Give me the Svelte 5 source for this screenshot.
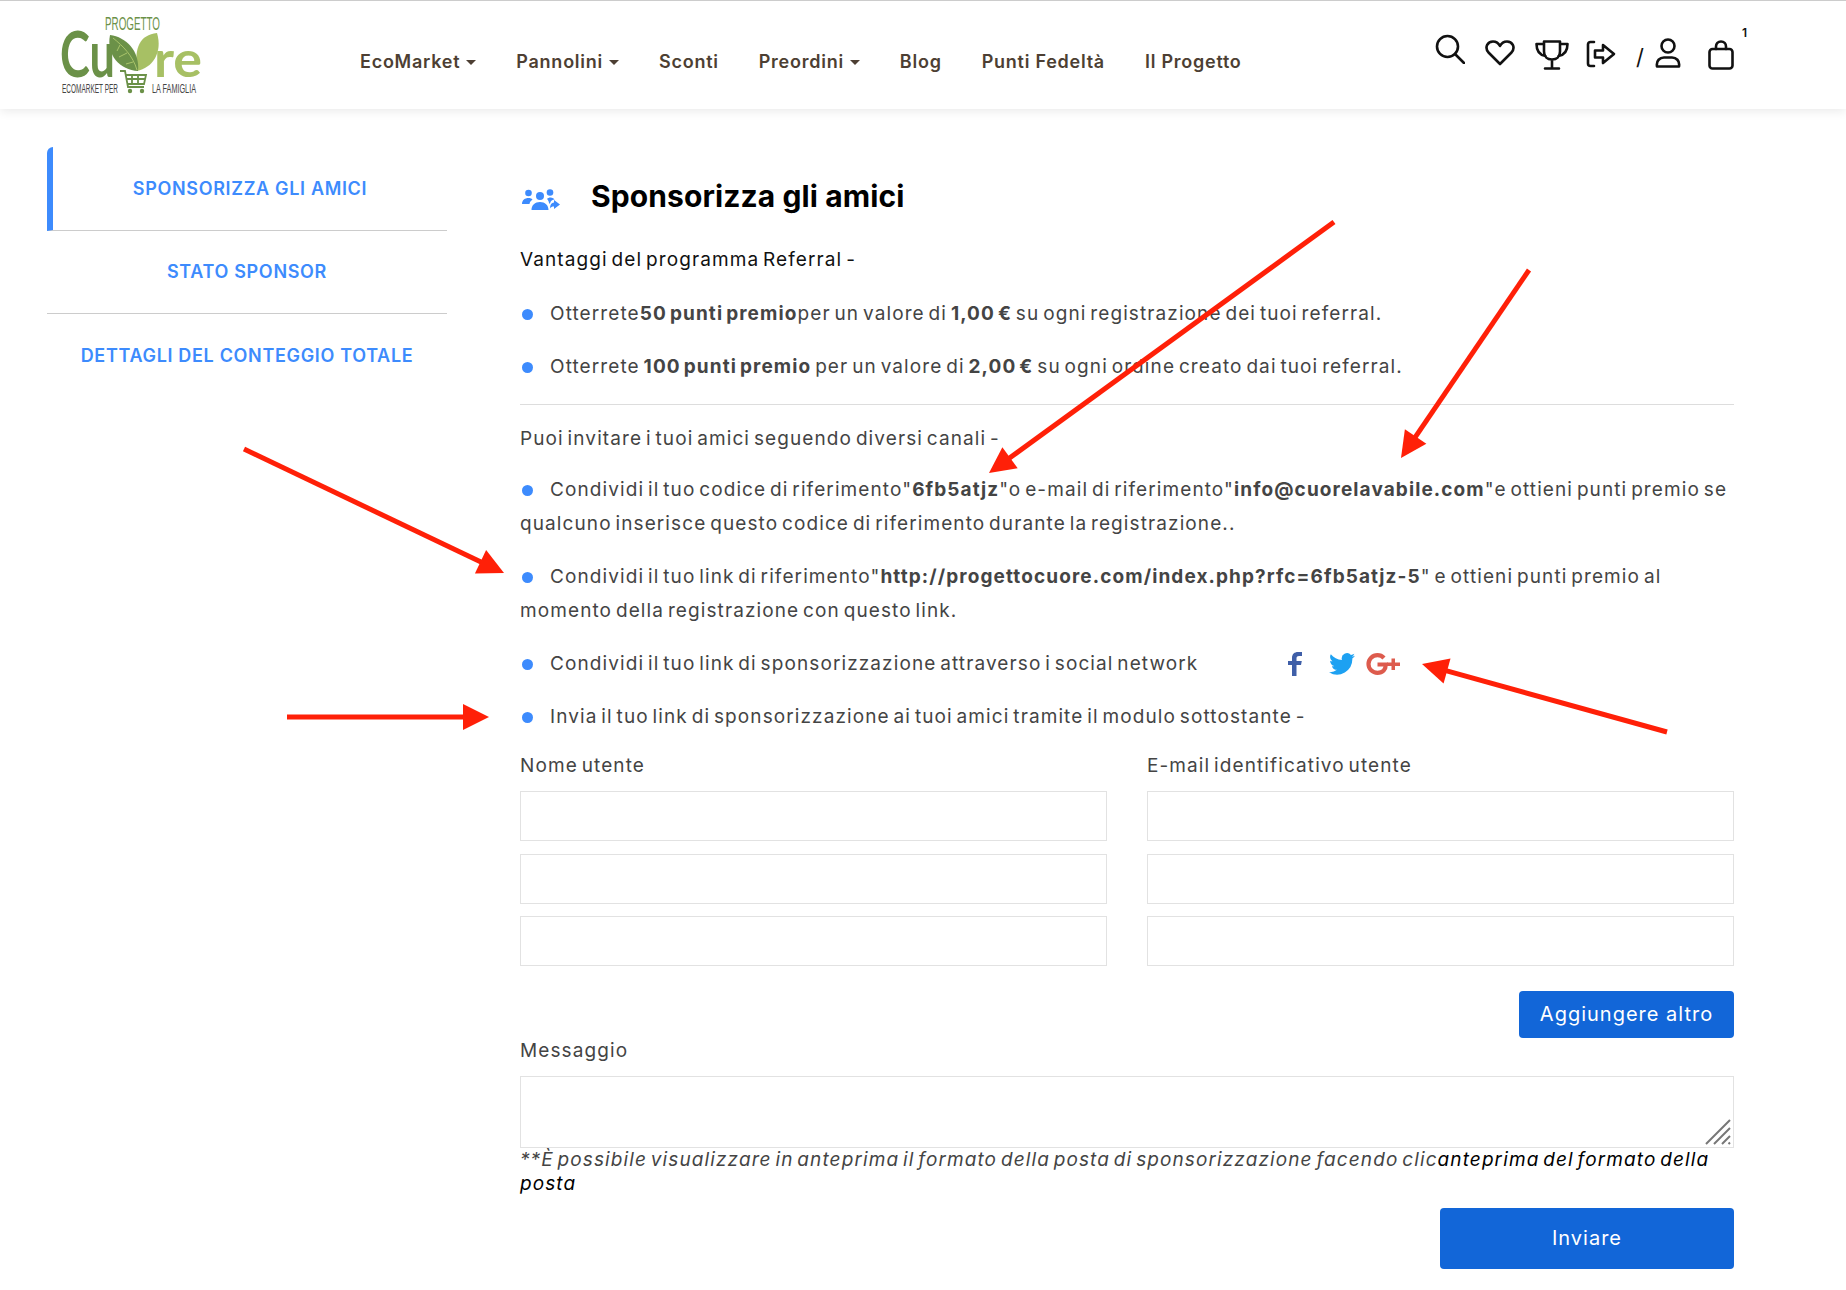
<script>
const nav = [
  { label: 'EcoMarket', caret: true },
  { label: 'Pannolini', caret: true },
  { label: 'Sconti' },
  { label: 'Preordini', caret: true },
  { label: 'Blog' },
  { label: 'Punti Fedeltà' },
  { label: 'Il Progetto' }
]
const tabs = ['SPONSORIZZA GLI AMICI', 'STATO SPONSOR', 'DETTAGLI DEL CONTEGGIO TOTALE']

// annotation arrows drawn on the screenshot: tail x,y then tip x,y
const arrows = [
  [1334, 222, 989, 473],
  [1529, 270, 1401, 458],
  [244, 449, 504, 573],
  [287, 717, 489, 717],
  [1667, 732, 1422, 664]
]
function head(a) {
  const ang = Math.atan2(a[3] - a[1], a[2] - a[0])
  const len = 26, w = 13
  const bx = a[2] - Math.cos(ang) * len, by = a[3] - Math.sin(ang) * len
  const nx = -Math.sin(ang) * w, ny = Math.cos(ang) * w
  return `${a[2]},${a[3]} ${bx + nx},${by + ny} ${bx - nx},${by - ny}`
}
function neck(a) {
  const ang = Math.atan2(a[3] - a[1], a[2] - a[0])
  return { x: a[2] - Math.cos(ang) * 22, y: a[3] - Math.sin(ang) * 22 }
}
</script>

<div class="page">
  <header>
    <a class="logo" href="#top">
      <svg width="190" height="84" viewBox="0 0 190 84">
        <text x="45" y="17" class="l-prog" textLength="55" lengthAdjust="spacingAndGlyphs">PROGETTO</text>
        <text x="0" y="64" class="l-cu" textLength="55" lengthAdjust="spacingAndGlyphs">Cu</text>
        <path d="M97 20C80 22 74 34 77 58 92 55 103 40 97 20z" fill="#a7c064"/>
        <path d="M50 22C66 24 80 38 78 58 60 57 46 42 50 22z" fill="#6b9148"/>
        <path d="M53 25c10 8 20 18 24 32M60 32l-3 6M67 40l-8 4M73 49l-7 2" stroke="#a9c46a" stroke-width="1" fill="none"/>
        <text x="94" y="64" class="l-re" textLength="48" lengthAdjust="spacingAndGlyphs">re</text>
        <text x="2" y="80" class="l-sub" textLength="56" lengthAdjust="spacingAndGlyphs">ECOMARKET PER</text>
        <text x="92" y="80" class="l-sub" textLength="44" lengthAdjust="spacingAndGlyphs">LA FAMIGLIA</text>
        <path d="M60 58h5l3 16h16M66 62h20l-2 9H68M72 62v9M78 62v9M67 66h18" stroke="#6b9148" stroke-width="1.800" fill="none"/>
        <circle cx="70" cy="78" r="2.200" fill="#6b9148"/><circle cx="82" cy="78" r="2.200" fill="#6b9148"/>
      </svg>
    </a>
    <nav>
      {#each nav as item}
        <span class="nav-item">{item.label}{#if item.caret}<i class="caret"></i>{/if}</span>
      {/each}
    </nav>
    <div class="tools">
      <svg class="t-search" width="30" height="30" viewBox="0 0 30 30"><circle cx="12.500" cy="12.500" r="10.500"/><path d="M20 20l9 9"/></svg>
      <svg class="t-heart" width="30" height="26" viewBox="0 0 30 26"><path d="M15 24L3.500 12.500C-1 7 3 1.500 8 1.500c3 0 5.500 1.500 7 4.500 1.500-3 4-4.500 7-4.500 5 0 9 5.500 4.500 11z"/></svg>
      <svg class="t-trophy" width="34" height="30" viewBox="0 0 34 30"><path d="M9 1.500h16v10c0 5-3 8-8 8s-8-3-8-8zM9 4H1.500c0 7 3 11 9 12M25 4h7.500c0 7-3 11-9 12M17 19.500V28M10 28.500h14"/></svg>
      <svg class="t-login" width="30" height="28" viewBox="0 0 30 28"><path d="M8 2H4.500C3 2 2 3 2 4.500v19C2 25 3 26 4.500 26H8M9 10.500h8V5l11 9-11 9v-5.500H9z"/></svg>
      <span class="slash">/</span>
      <svg class="t-user" width="26" height="30" viewBox="0 0 26 30"><circle cx="13" cy="8" r="6.500"/><path d="M2 28.500c-1-6 3-9 7-9h8c4 0 8 3 7 9z"/></svg>
      <span class="bag">
        <svg width="26" height="30" viewBox="0 0 26 30"><rect x="1.500" y="9" width="23" height="19.500" rx="3"/><path d="M8 9V6.500c0-3 2-5 5-5s5 2 5 5V9"/></svg>
        <b>1</b>
      </span>
    </div>
  </header>

  <div class="body">
    <aside>
      {#each tabs as tab, i}
        <a href="#top" class="tab" class:active={i === 0} class:last={i === 2}>{tab}</a>
      {/each}
    </aside>

    <main>
      <div class="title">
        <svg width="38" height="24" viewBox="0 0 38 24" fill="#3d8bfd">
          <circle cx="6.500" cy="5" r="3.300"/><circle cx="18" cy="8" r="4"/><circle cx="28" cy="4.500" r="3.300"/>
          <path d="M0 16c0-4 3-6 6.500-6 2 0 3 .5 4 1.500-2 1.500-3 3-3 4.500zM9.500 22c0-5 3.500-8 8.500-8s8.500 3 8.500 8zM25 11c1-1 2-1.500 3.500-1.500 2 0 3.500 1 4 2-2 0-4 1.500-4.500 4H27c0-2-1-3.500-2-4.500z"/>
          <path d="M32 12l6 4.500-6 4.500v-2.500c-2 0-3 .5-4 2 0-4 1.500-6 4-6z"/>
        </svg>
        <h1>Sponsorizza gli amici</h1>
      </div>

      <p class="lead">Vantaggi del programma Referral -</p>
      <p><i class="dot"></i>Otterrete<b>50 punti premio</b>per un valore di <b>1,00 €</b> su ogni registrazione dei tuoi referral.</p>
      <p><i class="dot"></i>Otterrete <b>100 punti premio</b> per un valore di <b>2,00 €</b> su ogni ordine creato dai tuoi referral.</p>
      <hr />
      <p class="tight">Puoi invitare i tuoi amici seguendo diversi canali -</p>
      <p><i class="dot"></i>Condividi il tuo codice di riferimento"<b>6fb5atjz</b>"o e-mail di riferimento"<b>info@cuorelavabile.com</b>"e ottieni punti premio se qualcuno inserisce questo codice di riferimento durante la registrazione..</p>
      <p><i class="dot"></i>Condividi il tuo link di riferimento"<b>http://progettocuore.com/index.php?rfc=6fb5atjz-5</b>" e ottieni punti premio al momento della registrazione con questo link.</p>
      <p class="social-row">
        <span><i class="dot"></i>Condividi il tuo link di sponsorizzazione attraverso i social network</span>
        <span class="social">
          <svg width="16" height="24" viewBox="0 0 16 24"><path fill="#3f5fa8" d="M5 24V13H1V9h4V6c0-4 2.500-6 6-6h4v4h-3c-1.500 0-2.500.7-2.500 2.300V9h5.300l-.8 4H9.500v11z"/></svg>
          <svg width="26" height="22" viewBox="0 0 24 20"><path fill="#1da1f2" d="M24 2.400c-.9.4-1.800.7-2.800.8 1-.6 1.800-1.600 2.200-2.700-1 .6-2 1-3.100 1.200A4.900 4.900 0 0 0 11.900 6.200C7.800 6 4.200 4 1.700.9c-1.300 2.200-.7 5.100 1.500 6.600-.8 0-1.600-.2-2.200-.6 0 2.400 1.700 4.500 3.900 5-.7.200-1.500.2-2.200.1.600 2 2.400 3.400 4.600 3.400A9.900 9.900 0 0 1 0 17.500 14 14 0 0 0 21.500 5c1-.7 1.800-1.600 2.500-2.600z"/></svg>
          <svg width="34" height="22" viewBox="0 0 34 22"><path fill="none" stroke="#dd5b4d" stroke-width="4.200" d="M18 5c-1.700-1.800-3.800-2.800-6.500-2.800C6.500 2.200 2.500 6 2.500 11s4 8.800 9 8.800c5.300 0 8.300-3.500 8.300-8.300H11.500"/><path fill="#dd5b4d" d="M25.500 5.500h3.500v4h5V13h-5v4h-3.500v-4h-4.500V9.500h4.500z"/></svg>
        </span>
      </p>
      <p class="tight-b"><i class="dot"></i>Invia il tuo link di sponsorizzazione ai tuoi amici tramite il modulo sottostante -</p>

      <form onsubmit={(e) => e.preventDefault()}>
        <div class="cols">
          <div class="col">
            <label for="n1">Nome utente</label>
            <input id="n1" />
            <input aria-label="Nome utente 2" />
            <input aria-label="Nome utente 3" />
          </div>
          <div class="col">
            <label for="e1">E-mail identificativo utente</label>
            <input id="e1" />
            <input aria-label="E-mail 2" />
            <input aria-label="E-mail 3" />
          </div>
        </div>
        <div class="more"><button type="button" class="btn">Aggiungere altro</button></div>
        <label for="msg">Messaggio</label>
        <div class="area">
          <textarea id="msg"></textarea>
          <svg class="grip" width="26" height="26" viewBox="0 0 26 26"><path d="M1 25L25 1M9 25L25 9M17 25l8-8M23.500 25l1.500-1.500"/></svg>
        </div>
        <p class="note">**È possibile visualizzare in anteprima il formato della posta di sponsorizzazione facendo clic<span>anteprima del formato della posta</span></p>
        <div class="send"><button type="submit" class="btn big">Inviare</button></div>
      </form>
    </main>
  </div>

  <svg class="marks" width="1846" height="1290" viewBox="0 0 1846 1290">
    {#each arrows as a}
      <line x1={a[0]} y1={a[1]} x2={neck(a).x} y2={neck(a).y} stroke="#ff2008" stroke-width="5" />
      <polygon points={head(a)} fill="#ff2008" />
    {/each}
  </svg>
</div>

<style>
:global(body) {
  margin: 0;
  background: #fff;
}
.page {
  position: relative;
  min-height: 1290px;
  font-family: "Inter", "Open Sans", sans-serif;
  font-size: 19px;
  letter-spacing: 1.1px;
  word-spacing: -2.6px;
  color: #444;
  overflow: hidden;
}
header {
  height: 108px;
  border-top: 1px solid #ccc;
  display: flex;
  box-shadow: 0 2px 10px rgba(0, 0, 0, .09);
  background: #fff;
}
.logo {
  margin: 12px 0 0 60px;
  width: 300px;
  display: block;
}
.l-prog { font: 400 19px "Liberation Sans", sans-serif; fill: #6b9148; letter-spacing: 0; word-spacing: 0; }
.l-cu { font: 700 64px "Lato", sans-serif; fill: #6b9148; letter-spacing: 0; }
.l-re { font: 700 50px "Lato", sans-serif; fill: #a7c064; letter-spacing: 0; }
.l-sub { font: 400 12px "Liberation Sans", sans-serif; fill: #444; letter-spacing: 0; word-spacing: 0; }
nav {
  display: flex;
  gap: 40px;
  padding-top: 50px;
  font-size: 18px;
  font-weight: 600;
  letter-spacing: .75px;
  word-spacing: 0;
  color: #4d3f33;
}
.nav-item { white-space: nowrap; }
.caret {
  display: inline-block;
  margin-left: 6px;
  vertical-align: 3px;
  border: 5px solid transparent;
  border-top-color: #4d3f33;
  border-bottom: 0;
}
.tools {
  margin-left: auto;
  margin-right: 112px;
  padding-top: 33px;
  display: flex;
  align-items: flex-start;
  gap: 20px;
}
.tools svg {
  fill: none;
  stroke: #111;
  stroke-width: 2.600;
  stroke-linejoin: round;
  stroke-linecap: round;
  display: block;
}
.t-heart, .t-trophy, .t-login { margin-top: 6px; }
.t-login { margin-left: -3px; }
.t-user { margin-top: 4px; }
.slash { margin: 10px -10px 0 0; font-size: 22px; color: #111; }
.bag { position: relative; margin: 6px 0 0 7px; }
.bag b {
  position: absolute;
  left: 34px;
  top: -15px;
  font-size: 12px;
  font-weight: 600;
  letter-spacing: 0;
  color: #111;
}
.body {
  display: flex;
  padding: 38px 112px 0 47px;
}
aside {
  width: 400px;
  margin-right: 73px;
  flex: none;
  align-self: flex-start;
}
.tab {
  display: flex;
  height: 83.5px;
  align-items: center;
  justify-content: center;
  box-sizing: border-box;
  border-bottom: 1px solid #ccc;
  color: #3d8bfd;
  font-size: 18px;
  font-weight: 600;
  letter-spacing: .67px;
  word-spacing: 0;
  text-decoration: none;
}
.tab.active {
  border-left: 6px solid #3d8bfd;
  border-top-left-radius: 6px;
}
.tab.last { border-bottom: 0; }
main {
  flex: 1;
  min-width: 0;
  line-height: 33.5px;
}
.title {
  display: flex;
  align-items: center;
  gap: 31px;
  height: 50px;
  margin-top: 25px;
  margin-bottom: 21px;
}
.title svg { margin-left: 2px; margin-top: 6px; }
h1 {
  margin: 0;
  font-size: 30px;
  font-weight: 700;
  letter-spacing: .1px;
  word-spacing: 0;
  color: #000;
}
p { margin: 0 0 20px; }
.lead { color: #111; }
.dot {
  display: inline-block;
  width: 11px;
  height: 11px;
  margin: 0 17px 0 2px;
  border-radius: 50%;
  background: #3d8bfd;
  vertical-align: 0;
}
b { font-weight: 700; letter-spacing: 1.1px; }
hr {
  margin: 0 0 17px;
  border: 0;
  border-top: 1px solid #ddd;
}
.tight { margin-bottom: 18px; }
.social-row { display: flex; align-items: center; margin-bottom: 19px; }
.social {
  display: flex;
  align-items: center;
  margin-left: 89px;
}
.social svg:nth-child(2) { margin-left: 26px; }
.social svg:nth-child(3) { margin-left: 11px; }
.tight-b { margin-bottom: 21px; }
.cols {
  display: flex;
  gap: 40px;
}
.col {
  flex: 1;
  display: flex;
  flex-direction: column;
}
label { display: block; height: 37px; line-height: 24px; }
input, textarea {
  box-sizing: border-box;
  display: block;
  width: 100%;
  border: 1px solid #e2e2e2;
  background: #fff;
  outline: none;
}
input { height: 50px; margin-bottom: 12.5px; }
.more {
  display: flex;
  justify-content: flex-end;
  margin-top: 12.5px;
  margin-bottom: 1px;
}
.btn {
  font: inherit;
  letter-spacing: 1px;
  word-spacing: 0;
  color: #fff;
  background: #1266d8;
  border: 0;
  border-radius: 4px;
  width: 215px;
  height: 47px;
  font-size: 20px;
  padding: 0;
}
.btn.big { width: 294px; height: 61px; }
.area { position: relative; height: 72px; }
textarea { height: 72px; resize: none; }
.grip {
  position: absolute;
  right: 3px;
  bottom: 3px;
  fill: none;
  stroke: #777;
  stroke-width: 2;
}
.note {
  margin: 0;
  font-style: italic;
  line-height: 24px;
  color: #444;
}
.note span { color: #000; }
.send {
  display: flex;
  justify-content: flex-end;
  margin-top: 12px;
}
.marks {
  position: absolute;
  left: 0;
  top: 0;
  pointer-events: none;
}
</style>
